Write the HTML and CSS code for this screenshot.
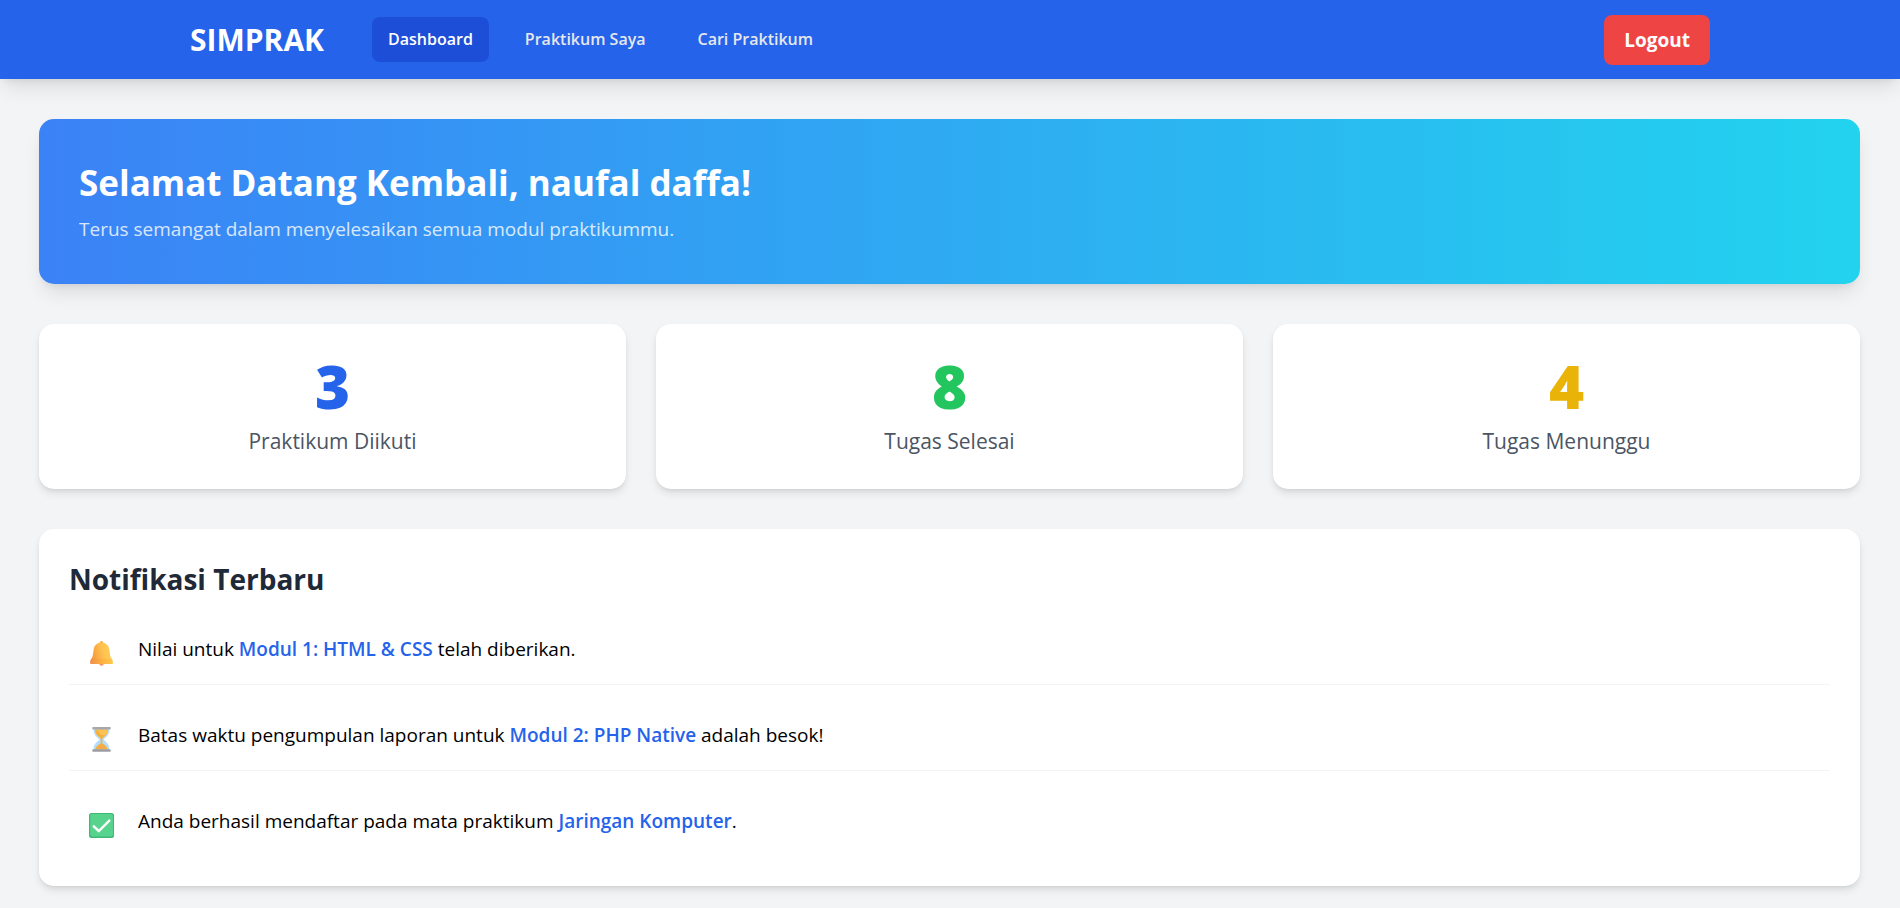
FILE: index.html
```html
<!DOCTYPE html>
<html lang="id">
<head>
<meta charset="utf-8">
<meta name="viewport" content="width=device-width, initial-scale=1">
<title>SIMPRAK - Dashboard</title>
<link rel="stylesheet" href="styles.css">
</head>
<body>
<header class="navbar">
  <div class="navbar-inner">
    <span class="brand">SIMPRAK</span>
    <nav class="nav-links">
      <a class="nav-link active" href="#dashboard">Dashboard</a>
      <a class="nav-link" href="#praktikum">Praktikum Saya</a>
      <a class="nav-link" href="#cari">Cari Praktikum</a>
    </nav>
    <a class="logout" href="#logout">Logout</a>
  </div>
</header>
<main class="content">
  <section class="banner">
    <h1 class="banner-title">Selamat Datang Kembali, naufal daffa!</h1>
    <p class="banner-text">Terus semangat dalam menyelesaikan semua modul praktikummu.</p>
  </section>
  <section class="stats">
    <div class="card stat"><div class="stat-value blue">3</div><div class="stat-label">Praktikum Diikuti</div></div>
    <div class="card stat"><div class="stat-value green">8</div><div class="stat-label">Tugas Selesai</div></div>
    <div class="card stat"><div class="stat-value yellow">4</div><div class="stat-label">Tugas Menunggu</div></div>
  </section>
  <section class="card notifications">
    <h2 class="section-title">Notifikasi Terbaru</h2>
    <ul class="notice-list">
      <li class="notice">
        <svg class="notice-icon" viewBox="0 0 25 25" aria-hidden="true">
          <defs>
            <linearGradient id="bell" x1="0" x2="1" y1="0.2" y2="0"><stop offset="0" stop-color="#f59a3c"/><stop offset="0.5" stop-color="#ffc350"/><stop offset="1" stop-color="#ffd35a"/></linearGradient>
            <linearGradient id="rim" x1="0" x2="1" y1="0" y2="0"><stop offset="0" stop-color="#f08d4c"/><stop offset="0.5" stop-color="#fbb040"/><stop offset="1" stop-color="#ffc84e"/></linearGradient>
          </defs>
          <circle cx="12.500" cy="22.500" r="2.300" fill="#f59070"/>
          <circle cx="12.500" cy="1.800" r="1.700" fill="#f7ab45"/>
          <path d="M12.500 1.500C8 1.500 5.200 4.400 4.700 8.500L3.600 15.500C3.300 17 1.200 18.200 1.200 20.500H23.800C23.800 18.200 21.700 17 21.400 15.500L20.300 8.500C19.800 4.400 17 1.500 12.500 1.500Z" fill="url(#bell)"/>
          <path d="M2.800 17.800H22.200C23.200 18.700 23.900 20.500 23.900 22C23.900 22.700 23.500 23 23 23H2C1.500 23 1.100 22.700 1.100 22C1.100 20.500 1.800 18.700 2.800 17.800Z" fill="url(#rim)"/>
        </svg>
        <span class="notice-text">Nilai untuk <a class="notice-link" href="#modul-1">Modul 1: HTML &amp; CSS</a> telah diberikan.</span>
      </li>
      <li class="notice">
        <svg class="notice-icon" viewBox="0 0 25 25" aria-hidden="true">
          <path d="M4.500 2H20.500C20.500 8 17.500 9.800 14.500 12.500C17.500 15.200 20.500 17 20.500 23H4.500C4.500 17 7.500 15.200 10.500 12.500C7.500 9.800 4.500 8 4.500 2Z" fill="#b5defa"/>
          <path d="M6 2.500H19C19 7 16.500 8.800 13.300 11.500H11.700C8.500 8.800 6 7 6 2.500Z" fill="#f6b23f"/>
          <path d="M9 2.500H19C19 5 17.800 6.800 16 8.300C12 8.300 9.500 6 9 2.500Z" fill="#ffc253"/>
          <path d="M11.700 11H13.300V16.500C15.800 17.500 18.200 19.500 18.800 22.500H6.200C6.800 19.500 9.200 17.500 11.700 16.500Z" fill="#f5ad45"/>
          <rect x="3.300" y="0" width="18.400" height="2.400" rx="0.700" fill="#a8a8ac"/>
          <rect x="3.300" y="22.300" width="18.400" height="2.400" rx="0.700" fill="#9c9ca2"/>
        </svg>
        <span class="notice-text">Batas waktu pengumpulan laporan untuk <a class="notice-link" href="#modul-2">Modul 2: PHP Native</a> adalah besok!</span>
      </li>
      <li class="notice">
        <svg class="notice-icon" viewBox="0 0 25 25" aria-hidden="true">
          <rect x="0" y="0" width="25" height="25" rx="2.500" fill="#3eb777"/>
          <rect x="1.200" y="1" width="22.800" height="22.500" rx="1.800" fill="#57d38d"/>
          <path d="M4.800 13.300L9.800 18.200L20.300 7.600" fill="none" stroke="#fff" stroke-width="2.400" stroke-linecap="round" stroke-linejoin="round"/>
        </svg>
        <span class="notice-text">Anda berhasil mendaftar pada mata praktikum <a class="notice-link" href="#jaringan">Jaringan Komputer</a>.</span>
      </li>
    </ul>
  </section>
</main>
</body>
</html>
```
FILE: styles.css
```css
* { box-sizing: border-box; }
body {
  margin: 0;
  background: #f3f4f6;
  color: #000;
  font-family: "Open Sans", "Noto Sans", sans-serif;
  font-size: 19px;
  line-height: 30px;
}
h1, h2, p, ul { margin: 0; padding: 0; }
a { color: inherit; text-decoration: none; }

.navbar {
  background: #2563eb;
  color: #fff;
  box-shadow: 0 12px 19px -4px rgb(0 0 0 / 0.1), 0 5px 8px -5px rgb(0 0 0 / 0.1);
}
.navbar-inner {
  display: flex;
  align-items: center;
  max-width: 1600px;
  height: 79px;
  margin: 0 auto;
  padding: 0 40px;
}
.brand { font-size: 30px; font-weight: 700; }
.nav-links { display: flex; gap: 20px; margin-left: 48px; }
.nav-link {
  padding: 10px 16px;
  border-radius: 8px;
  color: #e5e7eb;
  font-size: 16px;
  font-weight: 600;
  line-height: 25px;
}
.nav-link.active { background: #1d4ed8; color: #fff; }
.logout {
  margin-left: auto;
  padding: 10px 20px;
  border-radius: 8px;
  background: #ef4444;
  font-weight: 700;
}

.content { padding: 40px 40px 20px 39px; }
.banner {
  margin-bottom: 40px;
  padding: 40px;
  border-radius: 15px;
  background: linear-gradient(to right, #3b82f6, #22d3ee);
  color: #fff;
  box-shadow: 0 12px 19px -4px rgb(0 0 0 / 0.1), 0 5px 8px -5px rgb(0 0 0 / 0.1);
}
.banner-title { margin-bottom: 8px; font-size: 35px; font-weight: 700; line-height: 47px; }
.banner-text { opacity: 0.8; }

.card {
  padding: 30px;
  border-radius: 15px;
  background: #fff;
  box-shadow: 0 5px 8px -1px rgb(0 0 0 / 0.1), 0 2px 5px -2px rgb(0 0 0 / 0.1);
}
.stats { display: grid; grid-template-columns: repeat(3, 1fr); gap: 30px; margin-bottom: 40px; }
.stat { text-align: center; }
.stat-value { margin-bottom: 6px; font-size: 60px; font-weight: 800; line-height: 64px; }
.stat-label { color: #4b5563; font-size: 21px; line-height: 35px; }
.blue { color: #2563eb; }
.green { color: #22c55e; }
.yellow { color: #eab308; }

.section-title { margin-bottom: 20px; color: #1f2937; font-size: 28px; font-weight: 700; line-height: 40px; }
.notice-list { display: grid; gap: 20px; list-style: none; }
.notice { display: flex; align-items: flex-start; padding: 15px 20px; border-bottom: 1px solid #f3f4f6; }
.notice:last-child { border-bottom: 0; }
.notice-icon { flex: none; width: 25px; height: 25px; margin: 7px 24px 3px 0; }
.notice-link { color: #2563eb; font-weight: 600; }
```
